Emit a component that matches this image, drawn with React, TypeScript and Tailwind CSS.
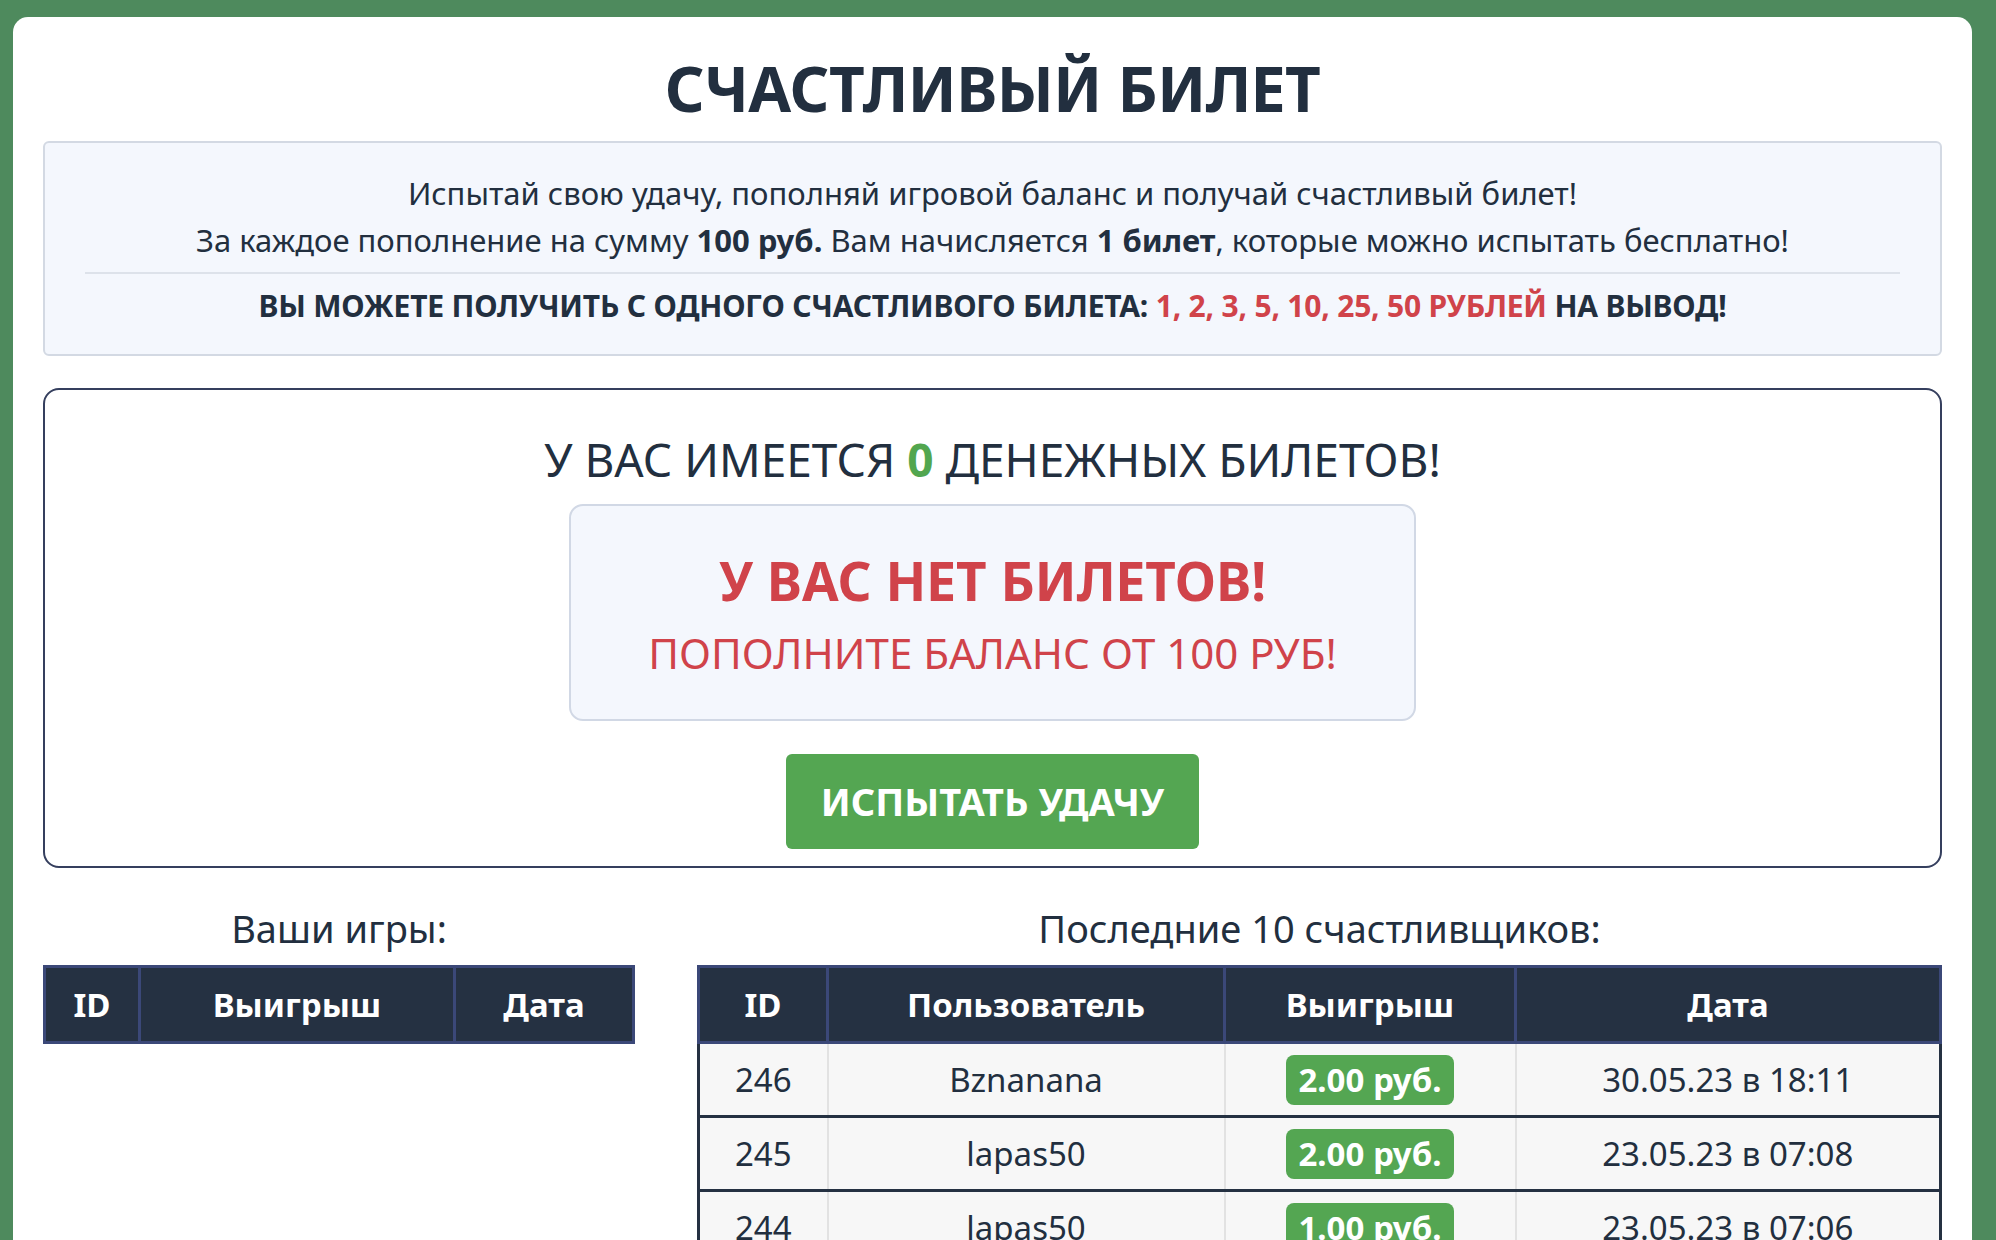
const winners = [
  { id: 246, user: "Bznanana", win: "2.00 руб.", date: "30.05.23 в 18:11" },
  { id: 245, user: "lapas50", win: "2.00 руб.", date: "23.05.23 в 07:08" },
  { id: 244, user: "lapas50", win: "1.00 руб.", date: "23.05.23 в 07:06" },
  { id: 243, user: "lapas50", win: "3.00 руб.", date: "23.05.23 в 07:05" },
  { id: 242, user: "Kirill77", win: "1.00 руб.", date: "21.05.23 в 14:32" },
  { id: 241, user: "Kirill77", win: "2.00 руб.", date: "21.05.23 в 14:30" },
  { id: 240, user: "mamont", win: "5.00 руб.", date: "19.05.23 в 22:17" },
  { id: 239, user: "Bznanana", win: "1.00 руб.", date: "18.05.23 в 09:41" },
  { id: 238, user: "alex_pro", win: "2.00 руб.", date: "17.05.23 в 11:03" },
  { id: 237, user: "alex_pro", win: "1.00 руб.", date: "17.05.23 в 11:01" },
];

const font = { fontFamily: '"Noto Sans", "Open Sans", sans-serif' };

export default function App() {
  return (
    <div className="min-h-screen bg-[#4e8a5d] pt-[17px] pl-[13px] pr-[24px]" style={font}>
      <div className="rounded-t-[15px] bg-white px-[30px] pt-[35px] pb-10 text-[#222f3f]">
        {/* Title */}
        <h1 className="text-center text-[62px] font-bold leading-[72px] tracking-[-0.5px]">
          СЧАСТЛИВЫЙ БИЛЕТ
        </h1>

        {/* Info */}
        <div className="mt-[17px] rounded-md border-2 border-[#d3d9e3] bg-[#f4f7fd] px-10 pt-[27px] pb-[28px] text-center">
          <p className="text-[31px] leading-[47px]">
            Испытай свою удачу, пополняй игровой баланс и получай счастливый билет!
          </p>
          <p className="text-[31px] leading-[47px]">
            За каждое пополнение на сумму <b>100 руб.</b> Вам начисляется <b>1 билет</b>, которые можно испытать бесплатно!
          </p>
          <div className="mt-[8px] h-[2px] bg-[#dde2ea]" />
          <p className="mt-[12px] text-[30px] font-bold uppercase leading-[40px] tracking-[-0.2px]">
            Вы можете получить с одного счастливого билета:{" "}
            <span className="text-[#d0434a]">1, 2, 3, 5, 10, 25, 50 рублей</span> на вывод!
          </p>
        </div>

        {/* Tickets */}
        <div className="mt-[32px] flex flex-col items-center rounded-[16px] border-2 border-[#353f5e] pt-[40px] pb-[17px]">
          <h2 className="text-[46px] leading-[58px]">
            У ВАС ИМЕЕТСЯ <b className="text-[#52a64f]">0</b> ДЕНЕЖНЫХ БИЛЕТОВ!
          </h2>
          <div className="mt-[16px] flex h-[217px] w-[847px] flex-col items-center rounded-[14px] border-2 border-[#d1d8e5] bg-[#f4f7fd] pt-[42px] text-[#d0434a]">
            <div className="text-[53px] font-bold leading-[66px]">У ВАС НЕТ БИЛЕТОВ!</div>
            <div className="mt-[14px] text-[42px] leading-[50px]">ПОПОЛНИТЕ БАЛАНС ОТ 100 РУБ!</div>
          </div>
          <button className="mt-[33px] h-[95px] w-[413px] rounded-md bg-[#54a652] text-[38px] font-bold text-white">
            ИСПЫТАТЬ УДАЧУ
          </button>
        </div>

        {/* Tables */}
        <div className="mt-[36px] flex gap-[62px]">
          <div className="w-[592px] shrink-0">
            <h3 className="text-center text-[38px] leading-[48px]">Ваши игры:</h3>
            <table className="mt-[13px] w-full border-collapse text-center">
              <thead>
                <tr className="h-[76px] bg-[#253142] text-[33px] font-bold text-white">
                  <th className="w-[95px] border-[3px] border-[#3b4878]">ID</th>
                  <th className="w-[315px] border-[3px] border-[#3b4878]">Выигрыш</th>
                  <th className="border-[3px] border-[#3b4878]">Дата</th>
                </tr>
              </thead>
            </table>
          </div>

          <div className="flex-1">
            <h3 className="text-center text-[38px] leading-[48px]">Последние 10 счастливщиков:</h3>
            <table className="mt-[13px] w-full border-collapse text-center">
              <thead>
                <tr className="h-[76px] bg-[#253142] text-[33px] font-bold text-white">
                  <th className="w-[129px] border-[3px] border-[#3b4878]">ID</th>
                  <th className="w-[397px] border-[3px] border-[#3b4878]">Пользователь</th>
                  <th className="w-[291px] border-[3px] border-[#3b4878]">Выигрыш</th>
                  <th className="border-[3px] border-[#3b4878]">Дата</th>
                </tr>
              </thead>
              <tbody className="text-[33px]">
                {winners.map((w) => (
                  <tr key={w.id} className="h-[74px] border-x-[3px] border-b-[3px] border-[#253142] bg-[#f7f7f7]">
                    <td className="border-r-2 border-[#e2e2e2]">{w.id}</td>
                    <td className="border-r-2 border-[#e2e2e2]">{w.user}</td>
                    <td className="border-r-2 border-[#e2e2e2]">
                      <span className="inline-flex h-[50px] items-center rounded-lg bg-[#54a652] px-[12px] text-[33px] font-bold text-white">
                        {w.win}
                      </span>
                    </td>
                    <td>{w.date}</td>
                  </tr>
                ))}
              </tbody>
            </table>
          </div>
        </div>
      </div>
    </div>
  );
}
